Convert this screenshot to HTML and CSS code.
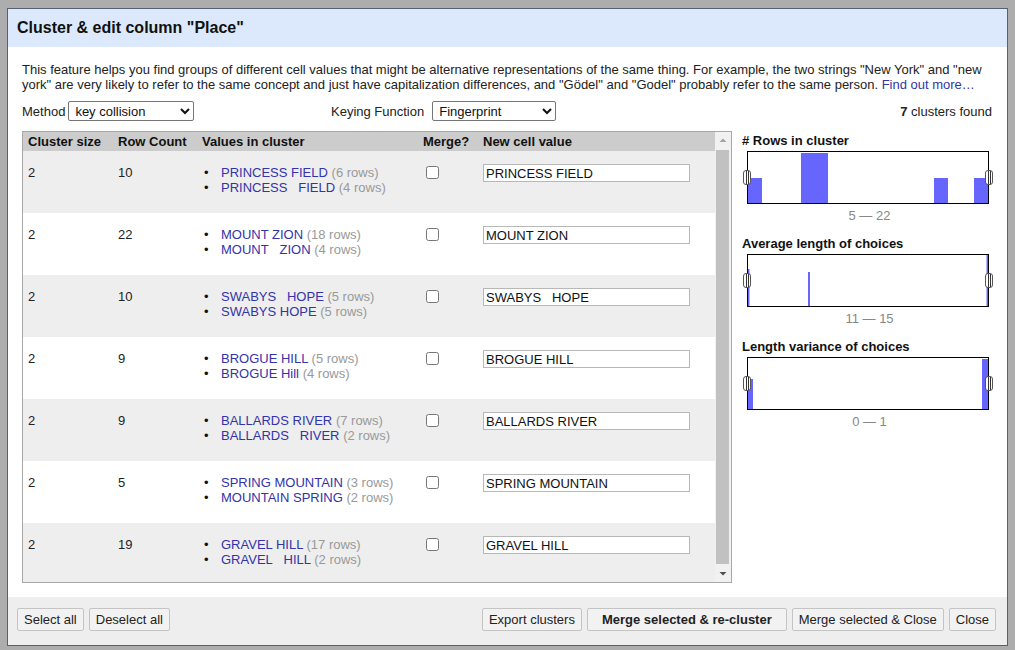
FILE: index.html
```html
<!DOCTYPE html>
<html>
<head>
<meta charset="utf-8">
<link rel="stylesheet" href="styles.css">
</head>
<body>
<div class="backdrop">
  <div class="dialog">
    <div class="dlg-header">Cluster &amp; edit column "Place"</div>
    <div class="dlg-body">
      <p class="desc">This feature helps you find groups of different cell values that might be alternative representations of the same thing. For example, the two strings "New York" and "new york" are very likely to refer to the same concept and just have capitalization differences, and "Gödel" and "Godel" probably refer to the same person. <a class="link" href="#">Find out more…</a></p>
      <div class="controls">
        <div class="ctl">Method <select class="sel sel-method"><option>key collision</option></select></div>
        <div class="ctl">Keying Function <select class="sel sel-key"><option>Fingerprint</option></select></div>
        <div class="found"><b>7</b> clusters found</div>
      </div>
      <div class="main">
        <div class="tablebox">
          <div class="tableview">
            <table class="clusters">
              <thead>
                <tr><th class="c1">Cluster size</th><th class="c2">Row Count</th><th class="c3">Values in cluster</th><th class="c4">Merge?</th><th class="c5">New cell value</th></tr>
              </thead>
              <tbody>
                <tr class="odd"><td>2</td><td>10</td><td><ul><li><a href="#">PRINCESS FIELD</a> <span class="cnt">(6 rows)</span></li><li><a href="#">PRINCESS&nbsp;&nbsp; FIELD</a> <span class="cnt">(4 rows)</span></li></ul></td><td><input type="checkbox" class="chk"></td><td><input type="text" class="val" value="PRINCESS FIELD"></td></tr>
                <tr class="even"><td>2</td><td>22</td><td><ul><li><a href="#">MOUNT ZION</a> <span class="cnt">(18 rows)</span></li><li><a href="#">MOUNT&nbsp;&nbsp; ZION</a> <span class="cnt">(4 rows)</span></li></ul></td><td><input type="checkbox" class="chk"></td><td><input type="text" class="val" value="MOUNT ZION"></td></tr>
                <tr class="odd"><td>2</td><td>10</td><td><ul><li><a href="#">SWABYS&nbsp;&nbsp; HOPE</a> <span class="cnt">(5 rows)</span></li><li><a href="#">SWABYS HOPE</a> <span class="cnt">(5 rows)</span></li></ul></td><td><input type="checkbox" class="chk"></td><td><input type="text" class="val" value="SWABYS   HOPE"></td></tr>
                <tr class="even"><td>2</td><td>9</td><td><ul><li><a href="#">BROGUE HILL</a> <span class="cnt">(5 rows)</span></li><li><a href="#">BROGUE Hill</a> <span class="cnt">(4 rows)</span></li></ul></td><td><input type="checkbox" class="chk"></td><td><input type="text" class="val" value="BROGUE HILL"></td></tr>
                <tr class="odd"><td>2</td><td>9</td><td><ul><li><a href="#">BALLARDS RIVER</a> <span class="cnt">(7 rows)</span></li><li><a href="#">BALLARDS&nbsp;&nbsp; RIVER</a> <span class="cnt">(2 rows)</span></li></ul></td><td><input type="checkbox" class="chk"></td><td><input type="text" class="val" value="BALLARDS RIVER"></td></tr>
                <tr class="even"><td>2</td><td>5</td><td><ul><li><a href="#">SPRING MOUNTAIN</a> <span class="cnt">(3 rows)</span></li><li><a href="#">MOUNTAIN SPRING</a> <span class="cnt">(2 rows)</span></li></ul></td><td><input type="checkbox" class="chk"></td><td><input type="text" class="val" value="SPRING MOUNTAIN"></td></tr>
                <tr class="odd"><td>2</td><td>19</td><td><ul><li><a href="#">GRAVEL HILL</a> <span class="cnt">(17 rows)</span></li><li><a href="#">GRAVEL&nbsp;&nbsp; HILL</a> <span class="cnt">(2 rows)</span></li></ul></td><td><input type="checkbox" class="chk"></td><td><input type="text" class="val" value="GRAVEL HILL"></td></tr>
              </tbody>
            </table>
          </div>
          <div class="scrollbar">
            <div class="sb-btn"><svg width="16" height="16" viewBox="0 0 16 16"><path d="M4.5 10 L8 6.5 L11.5 10 Z" fill="#a3a3a3"/></svg></div>
            <div class="sb-track"><div class="sb-thumb"></div></div>
            <div class="sb-btn"><svg width="16" height="16" viewBox="0 0 16 16"><path d="M4.5 6 L8 9.5 L11.5 6 Z" fill="#505050"/></svg></div>
          </div>
        </div>
        <div class="facets">
          <div class="facet">
            <div class="facet-title"># Rows in cluster</div>
            <div class="histo">
              <svg class="histo-svg" width="240" height="51" viewBox="0 0 240 51">
                <rect x="0" y="26" width="14" height="25" fill="#6666ff"/>
                <rect x="53" y="1" width="27" height="50" fill="#6666ff"/>
                <rect x="186" y="26" width="14" height="25" fill="#6666ff"/>
                <rect x="226" y="26" width="14" height="25" fill="#6666ff"/>
              </svg>
              <span class="handle handle-l"></span><span class="handle handle-r"></span>
            </div>
            <div class="range">5 — 22</div>
          </div>
          <div class="facet">
            <div class="facet-title">Average length of choices</div>
            <div class="histo">
              <svg class="histo-svg" width="240" height="51" viewBox="0 0 240 51">
                <rect x="0" y="14" width="1.5" height="37" fill="#6666ff"/>
                <rect x="60" y="17" width="2" height="34" fill="#6666ff"/>
                <rect x="238.5" y="0" width="1.5" height="51" fill="#6666ff"/>
              </svg>
              <span class="handle handle-l"></span><span class="handle handle-r"></span>
            </div>
            <div class="range">11 — 15</div>
          </div>
          <div class="facet">
            <div class="facet-title">Length variance of choices</div>
            <div class="histo">
              <svg class="histo-svg" width="240" height="51" viewBox="0 0 240 51">
                <rect x="0" y="21" width="5" height="30" fill="#6666ff"/>
                <rect x="234" y="1" width="6" height="50" fill="#6666ff"/>
              </svg>
              <span class="handle handle-l"></span><span class="handle handle-r"></span>
            </div>
            <div class="range">0 — 1</div>
          </div>
        </div>
      </div>
    </div>
    <div class="dlg-footer">
      <div class="btns">
        <button class="btn">Select all</button>
        <button class="btn">Deselect all</button>
      </div>
      <div class="btns">
        <button class="btn">Export clusters</button>
        <button class="btn btn-strong">Merge selected &amp; re-cluster</button>
        <button class="btn">Merge selected &amp; Close</button>
        <button class="btn">Close</button>
      </div>
    </div>
  </div>
</div>
</body>
</html>
```

FILE: styles.css
```css
* { box-sizing: border-box; }
html, body { margin: 0; padding: 0; }
body {
  width: 1015px;
  height: 650px;
  overflow: hidden;
  background: #adadad;
  font-family: "Liberation Sans", Arial, sans-serif;
  font-size: 13px;
  color: #111;
}
.backdrop {
  padding: 8px 7px 4px 7px;
}
.dialog {
  width: 1001px;
  height: 638px;
  border: 1px solid #56626f;
  background: #fff;
  display: flex;
  flex-direction: column;
}
.dlg-header {
  height: 38px;
  flex: none;
  background: #dce9fc;
  font-weight: bold;
  font-size: 16px;
  padding: 0 0 0 9px;
  line-height: 38px;
  color: #111;
}
.dlg-body {
  flex: 1;
  padding: 15px 14px 14px 14px;
  display: flex;
  flex-direction: column;
}
.desc {
  margin: 0;
  line-height: 15px;
  width: 962px;
  color: #222;
}
.link { color: #3535a8; text-decoration: none; }
.controls {
  display: grid;
  grid-template-columns: 309px auto 1fr;
  align-items: center;
  height: 20px;
  margin-top: 9px;
  color: #222;
}
.ctl { display: flex; align-items: center; }
.sel {
  font-family: "Liberation Sans", Arial, sans-serif;
  font-size: 13px;
  height: 20px;
  margin-left: 3px;
  padding: 0 0 0 2px;
  border: 1px solid #767676;
  border-radius: 2px;
  background: #fff;
  color: #111;
}
.sel-method { width: 126px; }
.sel-key { width: 124px; margin-left: 8px; }
.found { text-align: right; padding-right: 1px; }
.main {
  display: flex;
  margin-top: 10px;
  gap: 10px;
}
.tablebox {
  width: 710px;
  height: 452px;
  border: 1px solid #a8a8a8;
  display: flex;
}
.tableview {
  flex: 1;
  overflow: hidden;
}
.clusters {
  border-collapse: collapse;
  width: 100%;
  table-layout: fixed;
}
.clusters th {
  background: #cccccc;
  height: 19px;
  text-align: left;
  font-weight: bold;
  padding: 0 0 0 5px;
  color: #111;
  white-space: nowrap;
}
.c1 { width: 90px; }
.c2 { width: 84px; }
.c3 { width: 221px; }
.c4 { width: 60px; }
.clusters td {
  height: 62px;
  vertical-align: top;
  padding: 14px 0 0 5px;
  line-height: 15px;
  color: #222;
}
.clusters tr.odd td { background: #eeeeee; }
.clusters tr.even td { background: #ffffff; }
.clusters td:nth-child(4) { padding-left: 8px; }
.clusters td:nth-child(5) { padding-left: 5px; padding-top: 13px; }
.clusters ul {
  margin: 0;
  padding: 0 0 0 19px;
  list-style: none;
}
.clusters li { height: 15px; line-height: 15px; white-space: nowrap; }
.clusters li::before {
  content: "•";
  display: inline-block;
  width: 17px;
  margin-left: -17px;
  line-height: 15px;
  vertical-align: top;
  color: #111;
}
.clusters li a { color: #3333aa; text-decoration: none; }
.cnt { color: #999; }
.chk {
  margin: 1px 0 0 0;
  width: 13px;
  height: 13px;
}
.val {
  width: 207px;
  height: 18px;
  font-family: "Liberation Sans", Arial, sans-serif;
  font-size: 13px;
  color: #111;
  border: 1px solid #b8b8b8;
  padding: 0 2px;
  background: #fff;
}
.scrollbar {
  width: 16px;
  display: flex;
  flex-direction: column;
  background: #f1f1f1;
}
.sb-btn { height: 16px; display: flex; }
.sb-track { flex: 1; padding: 2px 2px 2px 1px; }
.sb-thumb { background: #c1c1c1; height: 100%; }
.facets {
  width: 250px;
  display: flex;
  flex-direction: column;
  gap: 10px;
  margin-top: 1px;
}
.facet-title {
  font-weight: bold;
  height: 19px;
  line-height: 18px;
  color: #111;
}
.histo {
  position: relative;
  width: 242px;
  height: 53px;
  margin-left: 5px;
  border: 1px solid #000;
  background: #fff;
}
.histo-svg { display: block; }
.handle {
  position: absolute;
  top: 18px;
  width: 8px;
  height: 15px;
  border: 1px solid #555;
  border-radius: 3px;
  background: linear-gradient(to right, #fff 0 2px, #333 2px 3px, #fff 3px 4px, #333 4px 5px, #fff 5px);
}
.handle-l { left: -5px; }
.handle-r { right: -5px; }
.range {
  text-align: center;
  color: #888;
  height: 21px;
  line-height: 24px;
  padding-left: 5px;
}
.dlg-footer {
  height: 48px;
  flex: none;
  background: #eeeeee;
  display: flex;
  justify-content: space-between;
  align-items: center;
  padding: 0 11px 3px 9px;
}
.btns { display: flex; gap: 5px; }
.btn {
  font-family: "Liberation Sans", Arial, sans-serif;
  font-size: 13px;
  height: 23px;
  padding: 0 6px;
  background: #f2f2f2;
  border: 1px solid #c4c4c4;
  border-radius: 2px;
  color: #222;
}
.btn-strong { font-weight: bold; padding: 0 14px; }
```
